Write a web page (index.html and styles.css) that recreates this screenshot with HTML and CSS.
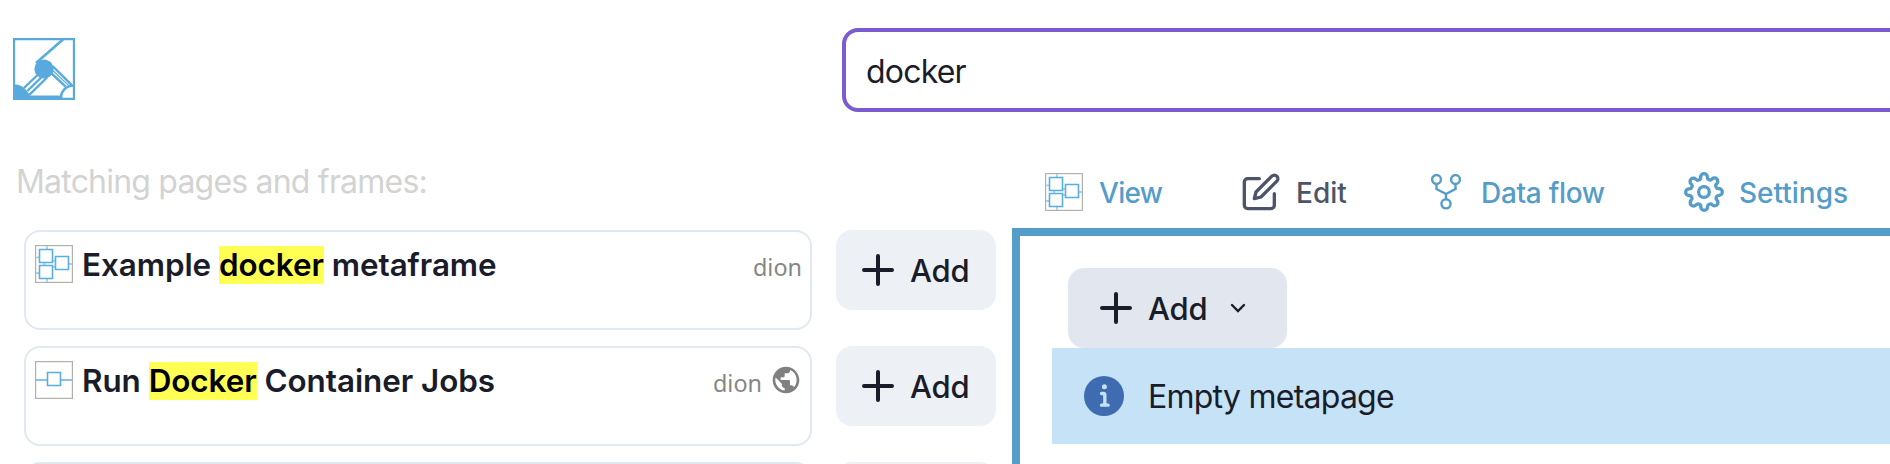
FILE: index.html
```html
<!DOCTYPE html>
<html lang="en">
<head>
<meta charset="utf-8">
<title>Metapage</title>
<link rel="stylesheet" href="styles.css">
</head>
<body>
<svg width="0" height="0" class="defs">
  <symbol id="plus" viewBox="0 0 24 24"><path d="M12 5v14M5 12h14" fill="none" stroke="currentColor" stroke-width="2" stroke-linecap="round"/></symbol>
  <symbol id="page" viewBox="0 0 38 38">
    <rect x=".6" y=".6" width="36.8" height="36.8" fill="none" stroke="#b1b1a9" stroke-width="1.2"/>
    <path d="M12 1v4M1 12.3h4M9.3 17v4M17 15.8h4M17 21.9h4M1 28h4M12 33v4M34 19h3" stroke="#a3d1f0" stroke-width="1.8"/>
    <path d="M4.500 4.500h13v13h-13zM4.500 20.500h13v13h-13zM20.500 11.500h13v13h-13z" fill="#fff" stroke="#59addf" stroke-width="1.600"/>
  </symbol>
  <symbol id="frame" viewBox="0 0 38 38">
    <rect x=".6" y=".6" width="36.8" height="36.8" fill="none" stroke="#b1b1a9" stroke-width="1.2"/>
    <path d="M1 19h11M26 19h11" stroke="#85c3e9" stroke-width="1.8"/>
    <path d="M12.500 11.500h13v13H12.500z" fill="#fff" stroke="#59addf" stroke-width="1.600"/>
  </symbol>
</svg>
<header class="header">
  <svg class="logo" viewBox="0 0 62 62" fill="none" stroke="#58aade" stroke-width="2.300">
    <path d="M1 1h60v60H1z"/>
    <path d="M23 25 50.500 1" stroke-width="2.600"/>
    <path d="M24.500 37 11 50M28.700 39 14.300 53M34 39.500 16.300 56.800M39.500 28 58.500 46.800M37 34 52.700 48.600" stroke-width="2.400"/>
    <path d="M39 31.800 55.500 47.400" stroke-width="1.200"/>
    <path d="M48 60c0-7 5-12.500 13.500-12.500" stroke-width="2.600"/>
    <circle cx="31" cy="31" r="9.600" fill="#58aade" stroke="none"/>
    <path d="M0 46.300c8 0 12 3 17 11.200h31V62H0z" fill="#58aade" stroke="none"/>
  </svg>
  <div class="search"><span class="query">docker</span></div>
</header>
<main class="main">
  <section class="results">
    <p class="caption"><span>Matching pages and frames:</span></p>
    <div class="row">
      <article class="card">
        <svg class="thumb"><use href="#page"/></svg>
        <h2 class="title">Example <mark>docker</mark> metaframe</h2>
        <span class="owner">dion</span>
      </article>
      <button class="add"><svg class="plus"><use href="#plus"/></svg><span>Add</span></button>
    </div>
    <div class="row">
      <article class="card">
        <svg class="thumb"><use href="#frame"/></svg>
        <h2 class="title">Run <mark>Docker</mark> Container Jobs</h2>
        <span class="owner">dion</span>
        <svg class="globe" viewBox="0 0 24 24" fill="#808080"><path d="M12 2C6.480 2 2 6.480 2 12s4.480 10 10 10 10-4.480 10-10S17.520 2 12 2zm-1 17.930c-3.950-.49-7-3.850-7-7.930 0-.62.080-1.210.21-1.790L9 15v1c0 1.100.9 2 2 2v1.930zm6.900-2.540c-.26-.81-1-1.390-1.900-1.390h-1v-3c0-.55-.45-1-1-1H8v-2h2c.55 0 1-.45 1-1V7h2c1.100 0 2-.9 2-2v-.41c2.930 1.190 5 4.060 5 7.410 0 2.080-.8 3.970-2.100 5.390z"/></svg>
      </article>
      <button class="add"><svg class="plus"><use href="#plus"/></svg><span>Add</span></button>
    </div>
    <div class="row">
      <article class="card"></article>
      <button class="add"></button>
    </div>
  </section>
  <section class="workspace">
    <nav class="tabs">
      <a class="tab tab-view"><svg class="thumb"><use href="#page"/></svg><span>View</span></a>
      <a class="tab tab-edit"><svg class="tab-icon" viewBox="0 0 24 24" fill="none" stroke="currentColor" stroke-width="2" stroke-linecap="round" stroke-linejoin="round"><path d="M11 4H4a2 2 0 0 0-2 2v14a2 2 0 0 0 2 2h14a2 2 0 0 0 2-2v-7"/><path d="M18.500 2.500a2.121 2.121 0 0 1 3 3L12 15l-4 1 1-4 9.500-9.500z"/></svg><span>Edit</span></a>
      <a class="tab tab-flow"><svg class="fork" viewBox="0 0 30 36" fill="none" stroke="currentColor" stroke-width="2.400"><circle cx="5.500" cy="5.500" r="4.400"/><circle cx="24.500" cy="5.500" r="4.400"/><circle cx="15" cy="29.800" r="4.600"/><path d="M5.500 10v5l9.500 5 9.500-5v-5M15 20v5.500"/></svg><span>Data flow</span></a>
      <a class="tab tab-settings"><svg class="tab-icon" viewBox="0 0 24 24" fill="none" stroke="currentColor" stroke-width="2" stroke-linejoin="round"><circle cx="12" cy="12" r="3.200"/><path d="M19.400 15a1.650 1.650 0 0 0 .33 1.820l.06.060a2 2 0 0 1-2.830 2.830l-.06-.06a1.650 1.650 0 0 0-2.800 1.170V21a2 2 0 0 1-4 0v-.09A1.650 1.650 0 0 0 7.180 19.730l-.06.060a2 2 0 0 1-2.830-2.830l.06-.06a1.650 1.650 0 0 0-1.170-2.800H3a2 2 0 0 1 0-4h.09A1.650 1.650 0 0 0 4.270 7.180l-.06-.06a2 2 0 0 1 2.830-2.830l.06.060a1.650 1.650 0 0 0 2.900-1.170V3a2 2 0 0 1 4 0v.09a1.650 1.650 0 0 0 2.820 1.170l.06-.06a2 2 0 0 1 2.830 2.830l-.06.060a1.650 1.650 0 0 0 1.170 2.910H21a2 2 0 0 1 0 4h-.09a1.650 1.650 0 0 0-1.510 1z"/></svg><span>Settings</span></a>
    </nav>
    <div class="panel">
      <button class="add add-menu"><svg class="plus"><use href="#plus"/></svg><span>Add</span><svg class="chevron" viewBox="0 0 16 10"><path d="m2 2 6 6 6-6" fill="none" stroke="currentColor" stroke-width="2.400" stroke-linecap="round"/></svg></button>
      <div class="alert">
        <svg class="info" viewBox="0 0 24 24" fill="#3f6cb0"><path d="M12,0A12,12,0,1,0,24,12,12.013,12.013,0,0,0,12,0Zm.25,5a1.500,1.500,0,1,1-1.500,1.500A1.500,1.500,0,0,1,12.250,5ZM14.500,18.500h-4a1,1,0,0,1,0-2h.75a.25.25,0,0,0,.25-.25v-4.500a.25.25,0,0,0-.25-.25H10.500a1,1,0,0,1,0-2h1a2,2,0,0,1,2,2v4.750a.25.25,0,0,0,.25.25h.75a1,1,0,1,1,0,2Z"/></svg>
        <span>Empty metapage</span>
      </div>
    </div>
  </section>
</main>
</body>
</html>
```
FILE: styles.css
```css
* { box-sizing: border-box; }
body {
  margin: 0;
  height: 464px;
  overflow: hidden;
  display: flex;
  flex-direction: column;
  background: #fff;
  color: #1a1d29;
  font-family: Inter, "Liberation Sans", sans-serif;
  font-size: 32px;
}
.defs { position: absolute; }
svg { flex: none; display: block; }
.header {
  flex: none;
  height: 140px;
  padding: 28px 0 0 13px;
  display: flex;
  align-items: flex-start;
}
.logo { width: 62px; height: 62px; margin-top: 10px; }
.search {
  flex: 1;
  height: 84px;
  margin: 0 -40px 0 767px;
  padding-left: 20px;
  border: 4px solid #7a5ccf;
  border-radius: 16px;
  line-height: 79px;
}
.query { letter-spacing: -0.8px; }
.main { flex: 1; display: flex; min-height: 0; }
.results {
  flex: none;
  width: 1012px;
  padding: 0 16px 0 24px;
  display: flex;
  flex-direction: column;
  gap: 16px;
  overflow: hidden;
}
.caption {
  flex: none;
  height: 74px;
  margin: 0 0 0 -8px;
  padding-top: 23px;
  line-height: 38px;
  color: #d3d3d3;
  letter-spacing: -0.8px;
}
.row { flex: none; display: flex; gap: 24px; align-items: flex-start; }
.card {
  width: 788px;
  height: 100px;
  padding: 13px 9px;
  display: flex;
  align-items: flex-start;
  border: 2px solid #e2e8f0;
  border-radius: 16px;
}
.thumb { width: 38px; height: 38px; }
.title {
  flex: 1;
  margin: 0 0 0 9px;
  font-size: 31.4px;
  font-weight: 600;
  line-height: 40px;
  letter-spacing: -0.05px;
  white-space: nowrap;
}
.title mark {
  background: linear-gradient(#ffff54, #ffff54) center / 100% 38px no-repeat;
  color: #000;
}
.owner {
  margin-right: -1px;
  font-family: "Noto Sans", sans-serif;
  font-size: 23.4px;
  line-height: 44px;
  color: #868686;
}
.globe { width: 32px; height: 32px; margin: 3px -1px 0 9px; }
.add {
  width: 160px;
  height: 80px;
  padding: 0 0 0 18px;
  display: flex;
  align-items: center;
  border: 0;
  border-radius: 16px;
  background: #edf1f6;
  color: #1a1d29;
  font: 500 31px/40px Inter, "Liberation Sans", sans-serif;
  letter-spacing: -0.2px;
}
.add span { padding-top: 1px; }
.plus { width: 48px; height: 48px; margin-right: 8px; }
.workspace { flex: 1; min-width: 0; display: flex; flex-direction: column; }
.tabs {
  flex: none;
  height: 88px;
  padding: 14px 0 0 33px;
  display: flex;
  font-size: 28px;
  font-weight: 500;
  color: #549dc9;
}
.tab { flex: none; height: 76px; display: flex; align-items: center; white-space: nowrap; }
.tab span { padding-top: 1px; }
.tab-view { width: 196px; gap: 16px; letter-spacing: -0.7px; }
.tab-edit { width: 190px; gap: 15px; color: #4c5567; }
.tab-flow { width: 253px; gap: 20px; letter-spacing: -0.3px; }
.tab-settings { gap: 15px; }
.tab-icon { width: 40px; height: 40px; }
.fork { width: 30px; height: 36px; }
.panel {
  flex: 1;
  padding: 32px 0 0 32px;
  border-top: 8px solid #549dc9;
  border-left: 8px solid #549dc9;
}
.add-menu { width: 219px; margin-left: 16px; padding-left: 24px; background: #e2e7ef; }
.chevron { width: 16px; height: 10px; margin-left: 23px; }
.alert {
  height: 96px;
  padding-left: 32px;
  display: flex;
  align-items: center;
  gap: 24px;
  background: #c6e2f7;
  letter-spacing: -0.75px;
}
.alert span { padding-top: 1px; }
.info { width: 40px; height: 40px; }
```
